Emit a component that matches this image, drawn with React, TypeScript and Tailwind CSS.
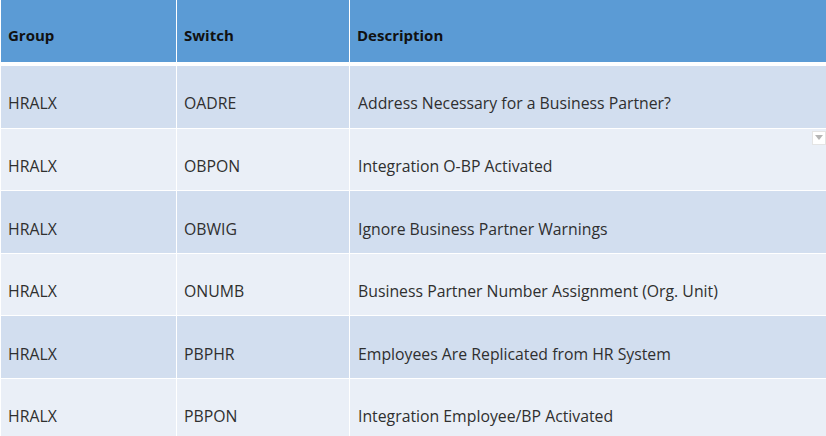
const rows = [
  { group: "HRALX", sw: "OADRE", desc: "Address Necessary for a Business Partner?" },
  { group: "HRALX", sw: "OBPON", desc: "Integration O-BP Activated" },
  { group: "HRALX", sw: "OBWIG", desc: "Ignore Business Partner Warnings" },
  { group: "HRALX", sw: "ONUMB", desc: "Business Partner Number Assignment (Org. Unit)" },
  { group: "HRALX", sw: "PBPHR", desc: "Employees Are Replicated from HR System" },
  { group: "HRALX", sw: "PBPON", desc: "Integration Employee/BP Activated" },
];

export default function App() {
  return (
    <div
      className="w-[826px] h-[436px] overflow-hidden bg-white pl-px relative"
      style={{ fontFamily: "'Open Sans', Lato, sans-serif" }}
    >
      {/* header */}
      <div className="grid grid-cols-[175px_172px_1fr] gap-x-px h-[62px] mb-[4px]">
        {["Group", "Switch", "Description"].map((h) => (
          <div key={h} className="bg-[#5b9bd5] flex items-center pt-[9px] pl-[7px] text-[15px] font-bold text-[#111]">
            {h}
          </div>
        ))}
      </div>

      {/* body */}
      <div className="flex flex-col gap-y-px">
        {rows.map((r, i) => (
          <div
            key={r.sw}
            className={`grid grid-cols-[175px_172px_1fr] gap-x-px h-[61.6px] ${i === 1 ? "relative" : ""}`}
          >
            {[r.group, r.sw, r.desc].map((c, j) => (
              <div
                key={j}
                className={`flex items-center pt-[15px] ${j === 2 ? "pl-[8px]" : "pl-[7px]"} text-[15.8px] text-[#2f2f2f] ${
                  i % 2 === 0 ? "bg-[#d2deef]" : "bg-[#eaeff7]"
                }`}
              >
                {c}
              </div>
            ))}
            {i === 1 && (
              <div className="absolute right-0 top-[2px] w-[14px] h-[14px] bg-white border border-[#e4e4e4] flex items-center justify-center">
                <svg width="8" height="5" viewBox="0 0 8 5">
                  <path d="M0 0h8L4 5z" fill="#b5b5b5" />
                </svg>
              </div>
            )}
          </div>
        ))}
      </div>
    </div>
  );
}
